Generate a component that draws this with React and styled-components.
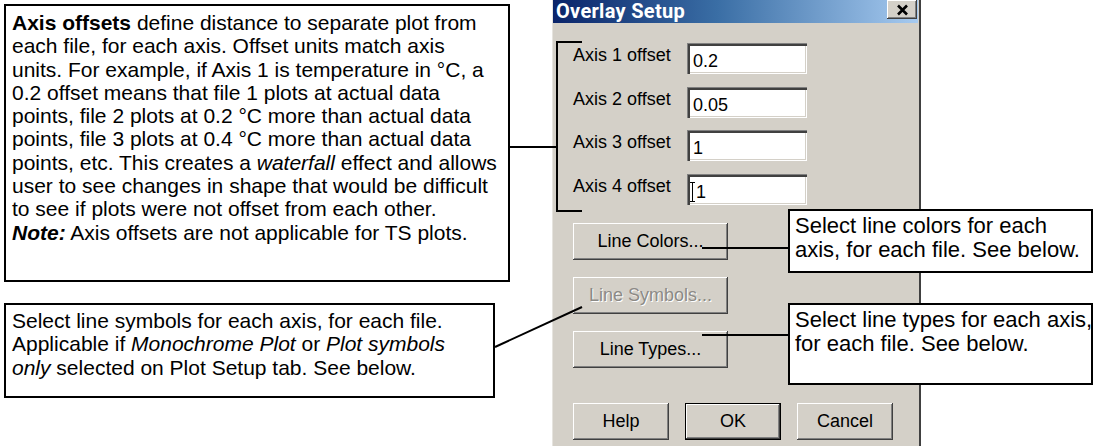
import React from "react";
import styled, { createGlobalStyle } from "styled-components";

const Global = createGlobalStyle`
  html, body { margin: 0; padding: 0; background: #ffffff; }
  body { font-family: "Liberation Sans", Arial, sans-serif; }
`;

const Page = styled.div`
  position: relative;
  width: 1094px;
  height: 446px;
  overflow: hidden;
  display: flex;
  align-items: flex-start;
  background: #ffffff;
`;

const CalloutColumn = styled.div`
  flex: none;
  width: 506px;
  padding: 4px 0 0 4px;
  display: flex;
  flex-direction: column;
  gap: 21px;
`;

const Callout = styled.div`
  box-sizing: border-box;
  width: ${(p) => p.$w}px;
  height: ${(p) => p.$h}px;
  border: 2px solid #000000;
  background: #ffffff;
  padding: ${(p) => p.$pad || "5px 6px"};
  font-family: "Liberation Sans", Arial, sans-serif;
  font-size: ${(p) => p.$fs || 21}px;
  line-height: ${(p) => p.$lh || 23.3}px;
  color: #000000;
  white-space: nowrap;
`;

const Line = styled.div`
  display: block;
`;

const RightCallouts = styled.div`
  position: absolute;
  left: 788px;
  top: 209px;
  display: flex;
  flex-direction: column;
  gap: 30px;
  z-index: 3;
`;

const Dialog = styled.div`
  flex: none;
  margin-left: 42px;
  width: 369px;
  height: 470px;
  box-sizing: border-box;
  background: #d4d0c8;
  border-left: 1px solid #e6e4df;
  border-right: 2px solid #404040;
  display: flex;
  flex-direction: column;
  font-family: "Liberation Sans", Arial, sans-serif;
  font-size: 18px;
  color: #000000;
`;

const TitleBar = styled.div`
  height: 23px;
  flex: none;
  margin-right: 1px;
  display: flex;
  align-items: flex-start;
  justify-content: space-between;
  overflow: hidden;
  background: linear-gradient(to right, #0a246a 0%, #3a6ea5 45%, #a6caf0 100%);
`;

const Title = styled.div`
  padding-left: 3px;
  color: #ffffff;
  font-family: Roboto, "Liberation Sans", sans-serif;
  font-weight: 700;
  font-size: 20px;
  line-height: 23px;
  letter-spacing: 0.3px;
  white-space: nowrap;
`;

const CloseButton = styled.div`
  box-sizing: border-box;
  width: 30px;
  height: 19px;
  margin-right: 1px;
  background: #d4d0c8;
  display: flex;
  align-items: center;
  justify-content: center;
  box-shadow: inset -1px -1px 0 #404040, inset 1px 1px 0 #ffffff,
    inset -2px -2px 0 #808080;
`;

const Body = styled.div`
  padding: 20px 0 0 20px;
  display: flex;
  flex-direction: column;
`;

const FormGrid = styled.div`
  display: grid;
  grid-template-columns: 114px 120px;
  row-gap: 12.5px;
  align-items: start;
`;

const Label = styled.div`
  padding-top: 2px;
  line-height: 20px;
  white-space: nowrap;
`;

const Field = styled.div`
  box-sizing: border-box;
  height: 31px;
  background: #ffffff;
  padding: 5px 0 0 6px;
  line-height: 20px;
  display: flex;
  align-items: center;
  box-shadow: inset 1px 1px 0 #808080, inset 3px 3px 0 #404040,
    inset -1px -1px 0 #ffffff, inset -2px -2px 0 #d4d0c8;
`;

const Caret = styled.span`
  position: relative;
  display: inline-block;
  width: 1px;
  height: 20px;
  background: #000000;
  margin: 0 3px 0 -1px;
  &::before,
  &::after {
    content: "";
    position: absolute;
    left: -2px;
    width: 5px;
    height: 1px;
    background: #000000;
  }
  &::before { top: 0; }
  &::after { bottom: 0; }
`;

const ButtonStack = styled.div`
  margin-top: 18.5px;
  display: flex;
  flex-direction: column;
  gap: 17px;
`;

const Button = styled.button`
  box-sizing: border-box;
  width: ${(p) => p.$w}px;
  height: 37px;
  padding: 0;
  margin: 0;
  background: #d4d0c8;
  border: ${(p) => (p.$default ? "1px solid #000000" : "none")};
  font-family: "Liberation Sans", Arial, sans-serif;
  font-size: 18px;
  color: #000000;
  box-shadow: inset -1px -1px 0 #404040, inset 1px 1px 0 #ffffff,
    inset -2px -2px 0 #808080;
  &:disabled {
    color: #8c8a86;
    text-shadow: 1px 1px 0 #ffffff;
  }
`;

const ButtonRow = styled.div`
  margin-top: 35px;
  display: flex;
  gap: 16px;
`;

const Leaders = styled.svg`
  position: absolute;
  left: 0;
  top: 0;
  width: 1094px;
  height: 446px;
  pointer-events: none;
  z-index: 2;
`;

export default function App() {
  return (
    <>
      <Global />
      <Page>
        <CalloutColumn>
          <Callout $w={506} $h={278}>
            <Line>
              <b>Axis offsets</b> define distance to separate plot from
            </Line>
            <Line>each file, for each axis. Offset units match axis</Line>
            <Line>units. For example, if Axis 1 is temperature in °C, a</Line>
            <Line>0.2 offset means that file 1 plots at actual data</Line>
            <Line>points, file 2 plots at 0.2 °C more than actual data</Line>
            <Line>points, file 3 plots at 0.4 °C more than actual data</Line>
            <Line>
              points, etc. This creates a <i>waterfall</i> effect and allows
            </Line>
            <Line>user to see changes in shape that would be difficult</Line>
            <Line>to see if plots were not offset from each other.</Line>
            <Line>
              <b>
                <i>Note:</i>
              </b>{" "}
              Axis offsets are not applicable for TS plots.
            </Line>
          </Callout>
          <Callout $w={491} $h={95} $pad="4px 6px">
            <Line>Select line symbols for each axis, for each file.</Line>
            <Line>
              Applicable if <i>Monochrome Plot</i> or <i>Plot symbols</i>
            </Line>
            <Line>
              <i>only</i> selected on Plot Setup tab. See below.
            </Line>
          </Callout>
        </CalloutColumn>

        <Dialog>
          <TitleBar>
            <Title>Overlay Setup</Title>
            <CloseButton>
              <svg width="13" height="12" viewBox="0 0 13 12">
                <path
                  d="M2 1.5 L11 10.5 M11 1.5 L2 10.5"
                  stroke="#000"
                  strokeWidth="2.6"
                  fill="none"
                />
              </svg>
            </CloseButton>
          </TitleBar>
          <Body>
            <FormGrid>
              <Label>Axis 1 offset</Label>
              <Field>0.2</Field>
              <Label>Axis 2 offset</Label>
              <Field>0.05</Field>
              <Label>Axis 3 offset</Label>
              <Field>1</Field>
              <Label>Axis 4 offset</Label>
              <Field>
                <Caret />1
              </Field>
            </FormGrid>
            <ButtonStack>
              <Button $w={155}>Line Colors...</Button>
              <Button $w={155} disabled>
                Line Symbols...
              </Button>
              <Button $w={155}>Line Types...</Button>
            </ButtonStack>
            <ButtonRow>
              <Button $w={96}>Help</Button>
              <Button $w={96} $default>
                OK
              </Button>
              <Button $w={96}>Cancel</Button>
            </ButtonRow>
          </Body>
        </Dialog>

        <RightCallouts>
          <Callout $w={305} $h={64} $fs={22} $lh={24} $pad="3px 5px">
            <Line>Select line colors for each</Line>
            <Line>axis, for each file. See below.</Line>
          </Callout>
          <Callout $w={305} $h={82} $fs={22} $lh={24} $pad="3px 5px">
            <Line>Select line types for each axis,</Line>
            <Line>for each file. See below.</Line>
          </Callout>
        </RightCallouts>

        <Leaders viewBox="0 0 1094 446">
          <g stroke="#000" strokeWidth="2" fill="none">
            <path d="M510 147 H557" />
            <path d="M582 42 H557 V211 H582" />
            <path d="M495 347 L582 307" />
            <path d="M702 248 H788" />
            <path d="M702 335 H788" />
          </g>
        </Leaders>
      </Page>
    </>
  );
}
